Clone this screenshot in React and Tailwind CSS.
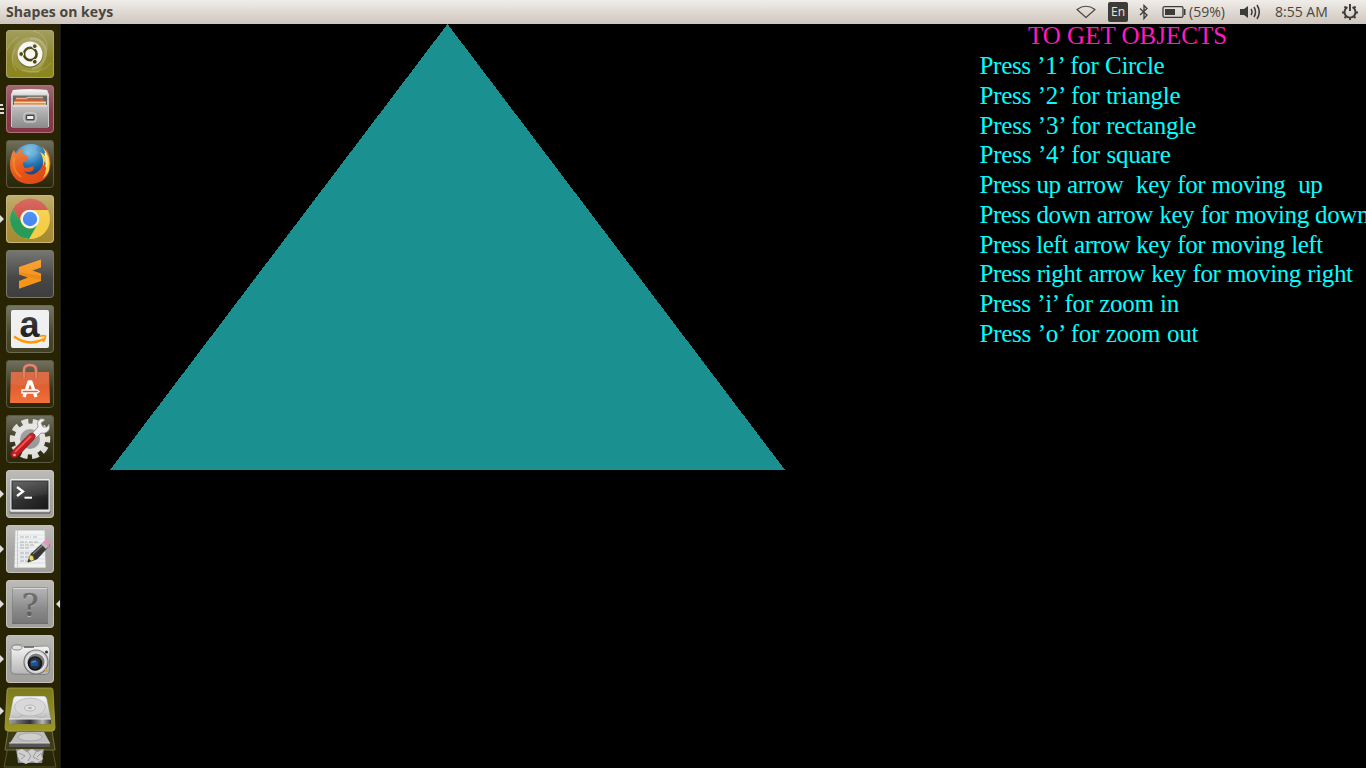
import React from "react";

const Svg = ({ children }) => (
  <svg viewBox="0 0 48 48" className="block size-12">{children}</svg>
);

const Ubuntu = () => (
  <Svg>
    <path d="M7 33C2 21 12 7 24 7Q38 7 41 20Q42 32 32 43Q12 44 7 33Z" fill="#fff" opacity=".12" />
    <path d="M24 9C34 7 42 16 39 27C37 33 33 37 26 39" fill="none" stroke="#fff" strokeWidth="2.500" opacity=".16" />
    <path d="M27 1Q42 4 41 20M1 20Q4 12 12 7M10 41Q3 30 9 19M16 40Q34 46 45 33" fill="none" stroke="#fff" opacity=".2" />
    <circle cx="24" cy="25" r="12.700" fill="#49470b" opacity=".5" />
    <circle cx="24" cy="24" r="12.500" fill="#f7f7f5" />
    <circle cx="24.300" cy="24" r="6.300" fill="none" stroke="#49470c" strokeWidth="2.600" />
    <g fill="#49470c" stroke="#f7f7f5" strokeWidth="1">
      <circle cx="15.200" cy="24" r="2.400" /><circle cx="28.800" cy="16.200" r="2.400" /><circle cx="28.800" cy="31.800" r="2.400" />
    </g>
  </Svg>
);

const Files = () => (
  <Svg>
    <path d="M7 5Q24 3.500 41 5L43 10V42H5V10Z" fill="#c9c9c9" />
    <path d="M5 10L7 5Q24 3.500 41 5L43 10V15H5Z" fill="url(#silver)" />
    <path d="M7 10.500H41V21H7Z" fill="#555" />
    <path d="M9 14H38V21H9Z" fill="#c94716" />
    <path d="M10 13.500H20L22 12.500H37" fill="none" stroke="#f3a268" strokeWidth="1.500" />
    <path d="M8 17H40V21H8Z" fill="#ed853c" /><path d="M8 17.200H40" stroke="#ffe1a8" strokeWidth="1.200" />
    <path d="M6 21Q7 19 9 19.500H39Q41 19 42 21V43H6Z" fill="url(#drawer)" />
    <path d="M7 21H41" stroke="#eee" />
    <rect x="18" y="28" width="12" height="9" rx="2.500" fill="#999" stroke="#ddd" />
    <rect x="20.500" y="30.300" width="7.500" height="4.300" rx="1" fill="#eee" stroke="#444" strokeWidth="1.200" />
  </Svg>
);

const Firefox = () => (
  <Svg>
    <circle cx="25" cy="23" r="19" fill="url(#globe)" />
    <path d="M17 8Q25 1 32 6L29 9L33 13L28 16L22 12Z" fill="#5ba9d8" opacity=".5" />
    <path d="M40 9Q46 18 44 28C42 39 34 44 24 44C12 44 4 36 4 25C4 20 5 14 8 10L10 14Q12 10 17 9L16 13L19 15Q22 16 22 18Q21 21 18 22C16 23 17 26 19 28Q23 28 27 26Q29 29 26 31Q22 33 18 31Q23 37 30 33Q36 29 37 23L39 24Q40 19 37 14Q41 18 41 21Z" fill="url(#fox)" />
    <path d="M35 5Q46 16 43 30Q42 34 37 38Q42 29 39 21L37 26Q38 18 34 12Q38 14 39 16Q40 11 35 5Z" fill="#ffd13c" />
    <path d="M39 13Q42 20 40 27" fill="none" stroke="#fff0a0" strokeWidth="1.500" />
    <path d="M8 18Q6 31 15 37" fill="none" stroke="#f58828" strokeWidth="2" opacity=".8" />
  </Svg>
);

const Chrome = () => (
  <Svg>
    <circle cx="24" cy="24" r="20" fill="#f6ce45" />
    <path d="M6.700 14A20 20 0 0 1 42.300 15H24A9 9 0 0 0 15.500 28.500Z" fill="#d04c42" />
    <path d="M6.700 14A20 20 0 0 0 23 44L32 28.500A9 9 0 0 1 15.500 27.500Z" fill="#289a5a" />
    <circle cx="24" cy="24" r="9.300" fill="#f7f7f7" /><circle cx="24" cy="24" r="7.200" fill="#4688f1" />
  </Svg>
);

const Sublime = () => (
  <Svg>
    <path d="M13 17L35 9.500V17.500L26.500 20.500L35 23.500V31L13 38.700V31L22 27.500L13 24.500Z" fill="#f79519" />
    <path d="M13 24.500V22L35 26V30Z" fill="#d87b13" opacity=".4" />
  </Svg>
);

const Amazon = () => (
  <Svg>
    <rect x="5" y="5" width="38" height="38" rx="2" fill="#efefef" />
    <text x="23.500" y="31.500" textAnchor="middle" fontFamily="Liberation Sans, sans-serif" fontSize="36" fontWeight="700" fill="#242424">a</text>
    <path d="M8 31.500Q23 42 38 34" fill="none" stroke="#ff9900" strokeWidth="2.400" />
    <path d="M33.500 31.500Q37 30 39.500 31Q39.500 34 37 37" fill="none" stroke="#ff9900" strokeWidth="1.800" />
  </Svg>
);

const Software = () => (
  <Svg>
    <path d="M5 12H43L44 43H4Z" fill="url(#bag)" />
    <path d="M5 12H43V23Q25 27 4 24Z" fill="#fff" opacity=".06" />
    <path d="M18 18V10Q18 5 24 5Q30 5 30 10V18" fill="none" stroke="#b94e35" strokeWidth="3.200" />
    <path d="M18 18V10Q18 5 24 5Q30 5 30 10V18" fill="none" stroke="#dc745b" strokeWidth="2" />
    <path d="M18 37L23 22H25L30 37" fill="none" stroke="#fff" strokeWidth="3.400" strokeLinejoin="round" />
    <path d="M16 30H31L33 31.500L31 33H16Z" fill="#e85f2b" stroke="#fff" strokeWidth="1.300" />
  </Svg>
);

const Settings = () => (
  <Svg>
    <circle cx="24" cy="24" r="17.500" fill="none" stroke="#deddda" strokeWidth="5.500" strokeDasharray="6.600 4.396" strokeDashoffset="3.300" />
    <circle cx="24" cy="24" r="12.500" fill="#c9c9c7" stroke="#e3e3e2" strokeWidth="6" />
    <circle cx="24" cy="24" r="10" fill="#9a9b99" />
    <path d="M19 26L32 12Q30 7 34 4Q37 3 39 5L35 8L37 12L41 12L43 9Q45 14 41 17Q38 19 35 18L23 30Z" fill="#efefed" stroke="#777" strokeWidth=".8" />
    <path d="M5.500 37L24 18.500Q27 17 29 20Q30 22 28 24L12 41Q8 45 5 41Q4 39 5.500 37Z" fill="#c4191e" stroke="#751216" strokeWidth=".8" />
    <path d="M9 37L25 21" stroke="#e5584e" strokeWidth="2" />
    <circle cx="8.500" cy="40" r="1.300" fill="#f4aaa6" />
  </Svg>
);

const Terminal = () => (
  <Svg>
    <path d="M3 41H45L44 44H4Z" fill="#777" />
    <rect x="4" y="8.500" width="40" height="33.500" rx="1.500" fill="#e9e9e9" stroke="#999" strokeWidth=".6" />
    <rect x="6" y="11" width="36" height="28" fill="url(#screen)" stroke="#222" />
    <path d="M7 12H41V24L7 30Z" fill="#fff" opacity=".05" />
    <path d="M11 17L17 21.500L11 26" fill="none" stroke="#fff" strokeWidth="2.300" /><path d="M18.500 27.700H26" stroke="#fff" strokeWidth="2" />
  </Svg>
);

const Editor = () => (
  <Svg>
    <path d="M9 5H39L40 43H8Z" fill="#f1f1ef" stroke="#a5a5a5" strokeWidth=".8" />
    <path d="M11.500 5V42" stroke="#dda5aa" strokeWidth=".7" />
    <path d="M9 10H39M9 14H39M9 18H39M9 22H39M9 26H39M9 30H39M9 34H39M9 38H39" stroke="#c4d4e6" strokeWidth=".6" />
    <path d="M14 12H25M27 12H31M14 17H21M23 17H32M14 20H29M14 23H24M14 28H30M14 32H24M14 36H22" stroke="#777" strokeWidth=".9" strokeDasharray="4 1" opacity=".65" />
    <path d="M22 37L25 29L39 16L44 20L31 34Z" fill="#353535" stroke="#222" strokeWidth=".6" />
    <path d="M27 29L39 18" stroke="#777" strokeWidth="1.500" />
    <path d="M22 37L24 30L27 31L28 35Z" fill="#eadb65" stroke="#716832" strokeWidth=".5" /><path d="M21.500 37.500L22.800 33.500L25 36Z" fill="#333" />
    <path d="M35 19L38 16L43 21L40 24Z" fill="#bbb" /><path d="M37 17L40 15Q42 15 44 18Q44 21 42 22Z" fill="#e788bf" />
  </Svg>
);

const Unknown = () => (
  <Svg>
    <path d="M6 42H42V44H6Z" fill="#333" opacity=".45" />
    <rect x="6.500" y="7.500" width="35" height="35" rx="1" fill="url(#unknown)" stroke="#777" strokeWidth=".7" />
    <path d="M7 8.500H41" stroke="#d1d1d1" />
    <text x="24" y="37" textAnchor="middle" fontFamily="DejaVu Serif, serif" fontSize="31" fill="#c5c5c5">?</text>
    <text x="24" y="36" textAnchor="middle" fontFamily="DejaVu Serif, serif" fontSize="31" fill="#606060" stroke="#606060" strokeWidth=".6">?</text>
  </Svg>
);

const Camera = () => (
  <Svg>
    <path d="M5 13Q6 10 11 9.500Q16 9 18 12L41 11Q44 12 44 15L43 37Q42 40 38 39.500L8 39Q4 38 5 32Z" fill="url(#silver)" stroke="#777" strokeWidth=".8" />
    <ellipse cx="11" cy="12.500" rx="5" ry="2.500" fill="#ddd" stroke="#666" strokeWidth=".8" />
    <path d="M18 12H28" stroke="#555" strokeWidth="1.600" />
    <circle cx="30" cy="27" r="12" fill="#d2d2d2" stroke="#777" strokeWidth="1.200" />
    <circle cx="30" cy="27" r="9.300" fill="#777" stroke="#e9e9e9" strokeWidth="1.500" />
    <circle cx="29" cy="28.500" r="6.500" fill="#222d40" stroke="#111" strokeWidth="1.500" />
    <path d="M25 26H32V31H25Z" fill="#1455a0" /><path d="M26 26L30 25V27L25 28Z" fill="#a5c7e9" opacity=".4" />
    <circle cx="40.500" cy="17" r="1.500" fill="#222" /><rect x="39" y="34" width="3" height="3" fill="#f69b21" />
  </Svg>
);

const Drives = () => (
  <svg viewBox="0 0 60 81" className="-ml-1.5 block h-[81px] w-[60px]">
    <path d="M8 60H52L56 80H4Z" fill="#282707" stroke="#55552f" />
    <path d="M8 44H52L55 63H5Z" fill="#3c3b14" stroke="#70704b" />
    <path d="M16 62H44L42 76H18Z" fill="#8f8f8f" />
    <path d="M17 64L22 62L27 65L32 62L37 65L43 63L41 68L43 72L37 76L32 74L26 77L20 74L18 70Z" fill="#cfcfcf" />
    <path d="M19 66L25 69L21 72M27 64L31 69L28 74M36 65L33 70L39 73M41 66L37 70" fill="none" stroke="#8a8a8a" strokeWidth=".8" />
    <path d="M17 45H44L50 56H10Z" fill="#bdbdbd" /><ellipse cx="30" cy="50" rx="12" ry="4" fill="#cecece" stroke="#999" strokeWidth=".7" />
    <path d="M9 56H50V60H9Z" fill="#555" /><path d="M9 56H50" stroke="#d4d4d4" />
    <path d="M9 1H51Q53 1 53 4L55 41Q55 44 52 44H8Q5 44 5 41L7 4Q7 1 9 1Z" fill="url(#olive)" stroke="#a5a35b" strokeWidth=".8" />
    <path d="M16 9H44Q46 9 47 12L51 32V37H9V32L13 12Q14 9 16 9Z" fill="url(#silver)" stroke="#777" strokeWidth=".5" />
    <path d="M13 29Q15 33 21 29Q30 25 39 30Q43 32 47 28" fill="none" stroke="#b4b4b4" />
    <ellipse cx="30" cy="20" rx="15.500" ry="9" fill="#d8d8d8" stroke="#b5b5b5" strokeWidth=".7" />
    <ellipse cx="30" cy="21" rx="5.500" ry="3" fill="#e2e2e2" stroke="#b8b8b8" /><ellipse cx="30" cy="21" rx="2" ry="1" fill="#aaa" />
    <path d="M9 32H51V37H9Z" fill="url(#metal)" /><path d="M9 32H51" stroke="#eee" />
    <path d="M11 33V36M13 33V36M15 33V36" stroke="#999" strokeWidth=".8" />
  </svg>
);

const Defs = () => (
  <svg width="0" height="0" className="absolute">
    <defs>
      <linearGradient id="silver" x2="0" y2="1"><stop stopColor="#f5f5f5" /><stop offset="1" stopColor="#b5b5b5" /></linearGradient>
      <linearGradient id="drawer" x2="0" y2="1"><stop stopColor="#c2c2c2" /><stop offset="1" stopColor="#8a8a8a" /></linearGradient>
      <radialGradient id="globe" cx=".45" cy=".2" r=".7"><stop stopColor="#82c6e5" /><stop offset=".5" stopColor="#1d71b2" /><stop offset="1" stopColor="#12376d" /></radialGradient>
      <linearGradient id="fox" x2="1" y2="1"><stop stopColor="#ee7b27" /><stop offset=".5" stopColor="#e75219" /><stop offset="1" stopColor="#d84714" /></linearGradient>
      <linearGradient id="bag" x2="0" y2="1"><stop stopColor="#d05024" /><stop offset="1" stopColor="#f3703c" /></linearGradient>
      <linearGradient id="screen" x2="1" y2="1"><stop stopColor="#484848" /><stop offset="1" stopColor="#171717" /></linearGradient>
      <linearGradient id="unknown" x2="0" y2="1"><stop stopColor="#aaa" /><stop offset="1" stopColor="#777" /></linearGradient>
      <linearGradient id="olive" x2="0" y2="1"><stop stopColor="#7d7a1c" /><stop offset="1" stopColor="#9c9720" /></linearGradient>
      <linearGradient id="metal"><stop stopColor="#999" /><stop offset=".5" stopColor="#303039" /><stop offset=".8" stopColor="#b5b5b5" /><stop offset="1" stopColor="#444" /></linearGradient>
    </defs>
  </svg>
);

const dark = "from-[#4e4e38] to-[#292709] border-[#5b5940]";
const gray = "from-[#adaba8] to-[#a19f9b] border-[#c5c2bd]";
const items = [
  { Icon: Ubuntu, tone: "from-[#8c8737] to-[#8c861d] border-[#aba668]" },
  { Icon: Files, tone: "from-[#8a4350] to-[#843543] border-[#aa727a]", mark: "lines" },
  { Icon: Firefox, tone: dark },
  { Icon: Chrome, tone: "from-[#b29b4d] to-[#a48b30] border-[#c7b77d]", mark: "arrow" },
  { Icon: Sublime, tone: "from-[#555550] to-[#3d3d3e] border-[#77776a]" },
  { Icon: Amazon, tone: "from-[#555542] to-[#414025] border-[#6c6b50]" },
  { Icon: Software, tone: dark },
  { Icon: Settings, tone: dark },
  { Icon: Terminal, tone: gray, mark: "arrow" },
  { Icon: Editor, tone: gray, mark: "arrow" },
  { Icon: Unknown, tone: gray, mark: "arrow", active: true },
  { Icon: Camera, tone: gray, mark: "arrow" },
];

const Arrow = () => <svg viewBox="0 0 4 8" className="absolute top-5 -left-1.5 h-2 w-1"><path d="M0 0L4 4L0 8Z" fill="#ddd" /></svg>;

const Launcher = () => (
  <aside className="flex h-full w-[61px] shrink-0 flex-col gap-[7px] overflow-hidden border-r border-[#17191c] bg-[#272303] pt-1.5 pl-1.5">
    {items.map(({ Icon, tone, mark, active }, i) => (
      <div key={i} className="relative size-12 shrink-0">
        <div className={`relative size-12 rounded-[4px] bg-linear-to-b ${tone}`}>
          <Icon />
          <div className="absolute inset-x-0 top-0 h-7 rounded-t-[4px] bg-linear-to-b from-white/20 to-white/0" />
          <div className={`absolute inset-0 rounded-[4px] border ${tone}`} />
        </div>
        {mark === "arrow" && <Arrow />}
        {mark === "lines" && (
          <svg viewBox="0 0 4 12" className="absolute top-[18px] -left-1.5 h-3 w-1"><path d="M0 2H3M0 6H4M0 10H4" stroke="#ddd" strokeWidth="2" /></svg>
        )}
        {active && <svg viewBox="0 0 4 8" className="absolute top-5 -right-1.5 h-2 w-1"><path d="M4 0L0 4L4 8Z" fill="#ddd" /></svg>}
      </div>
    ))}
    <div className="relative -mt-[3px] shrink-0"><Arrow /><Drives /></div>
  </aside>
);

const TopBar = () => (
  <header className="flex h-6 shrink-0 items-center bg-linear-to-b from-[#f0ede8] to-[#cfc6be] pl-1.5 font-['Open_Sans',sans-serif] text-[14px] leading-6 text-[#4a463f]">
    <span className="text-[14px] font-bold whitespace-nowrap tracking-[0.05px]">Shapes on keys</span>
    <svg viewBox="0 0 20 14" className="ml-auto h-3.5 w-5 shrink-0"><path d="M1 4.500Q10 -2 19 4.500L10 12.500Z" fill="none" stroke="#4b4945" strokeWidth="1.200" strokeLinejoin="round" /></svg>
    <span className="ml-3 flex h-5 w-5 items-center justify-center rounded-xs bg-[#3c3b37] text-[12px] font-medium text-[#e9e5e0]">En</span>
    <svg viewBox="0 0 12 16" className="ml-2.5 h-4 w-3 shrink-0"><path d="M2 4.500L9 11L6 14.500V1.500L9 4.500L2 11" fill="none" stroke="#3c3b37" strokeWidth="1.300" /></svg>
    <svg viewBox="0 0 24 12" className="ml-3 h-3 w-6 shrink-0"><rect x="1" y=".7" width="20" height="10.600" rx="1.500" fill="none" stroke="#3c3b37" strokeWidth="1.300" /><path d="M3 3H13V9H3ZM22 3H23.500V9H22Z" fill="#3c3b37" /></svg>
    <span className="ml-[3px] w-[39px] whitespace-nowrap">(59%)</span>
    <svg viewBox="0 0 20 16" className="ml-3 h-4 w-5 shrink-0"><path d="M0 5H4L8 2V14L4 11H0Z" fill="#3c3b37" /><path d="M11 5Q13 8 11 11M14 3Q17 8 14 13M17 1Q21.500 8 17 15" fill="none" stroke="#3c3b37" strokeWidth="1.500" /></svg>
    <span className="ml-[15px] w-[54px] whitespace-nowrap">8:55 AM</span>
    <svg viewBox="0 0 18 18" className="mr-[7px] ml-3 size-[18px] shrink-0">
      <path d="M6.500 4.200A5.500 5.500 0 1 0 11.500 4.200M9 1V8M3.500 3.500L5 5M14.500 3.500L13 5M1 9.500H3.500M14.500 9.500H17M3.500 15L5 13.500M14.500 15L13 13.500M9 15V17" fill="none" stroke="#3c3b37" strokeWidth="1.900" />
    </svg>
  </header>
);

const lines = [
  ["Press ’1’ for Circle", "tracking-[-0.3px]"],
  ["Press ’2’ for triangle", "tracking-[-0.24px]"],
  ["Press ’3’ for rectangle", "tracking-[-0.22px]"],
  ["Press ’4’ for square", "tracking-[-0.2px]"],
  ["Press up arrow  key for moving  up", "tracking-[-0.43px]"],
  ["Press down arrow key for moving down", "tracking-[-0.43px]"],
  ["Press left arrow key for moving left", "tracking-[-0.48px]"],
  ["Press right arrow key for moving right", "tracking-[-0.4px]"],
  ["Press ’i’ for zoom in", "tracking-[-0.32px]"],
  ["Press ’o’ for zoom out", "tracking-[-0.25px]"],
];

export default function App() {
  return (
    <div className="flex h-screen w-screen flex-col overflow-hidden bg-black">
      <Defs />
      <TopBar />
      <main className="flex min-h-0 flex-1">
        <Launcher />
        <div className="flex min-w-0 flex-1">
          <svg viewBox="0 0 675 446" className="ml-[49px] block h-[446px] w-[675px] shrink-0" shapeRendering="crispEdges"><path d="M337.500 0L675 446H0Z" fill="#1a9090" /></svg>
          <section className="-mt-[2.760px] ml-[194.500px] shrink-0 font-['Liberation_Serif',serif] text-[25px] leading-[29.760px] whitespace-pre text-[#00ffff]">
            <h1 className="pl-[48.500px] text-[#ff1abf]">TO GET OBJECTS</h1>
            {lines.map(([text, tracking]) => <p key={text} className={`[word-spacing:0.6px] ${tracking}`}>{text}</p>)}
          </section>
        </div>
      </main>
    </div>
  );
}
